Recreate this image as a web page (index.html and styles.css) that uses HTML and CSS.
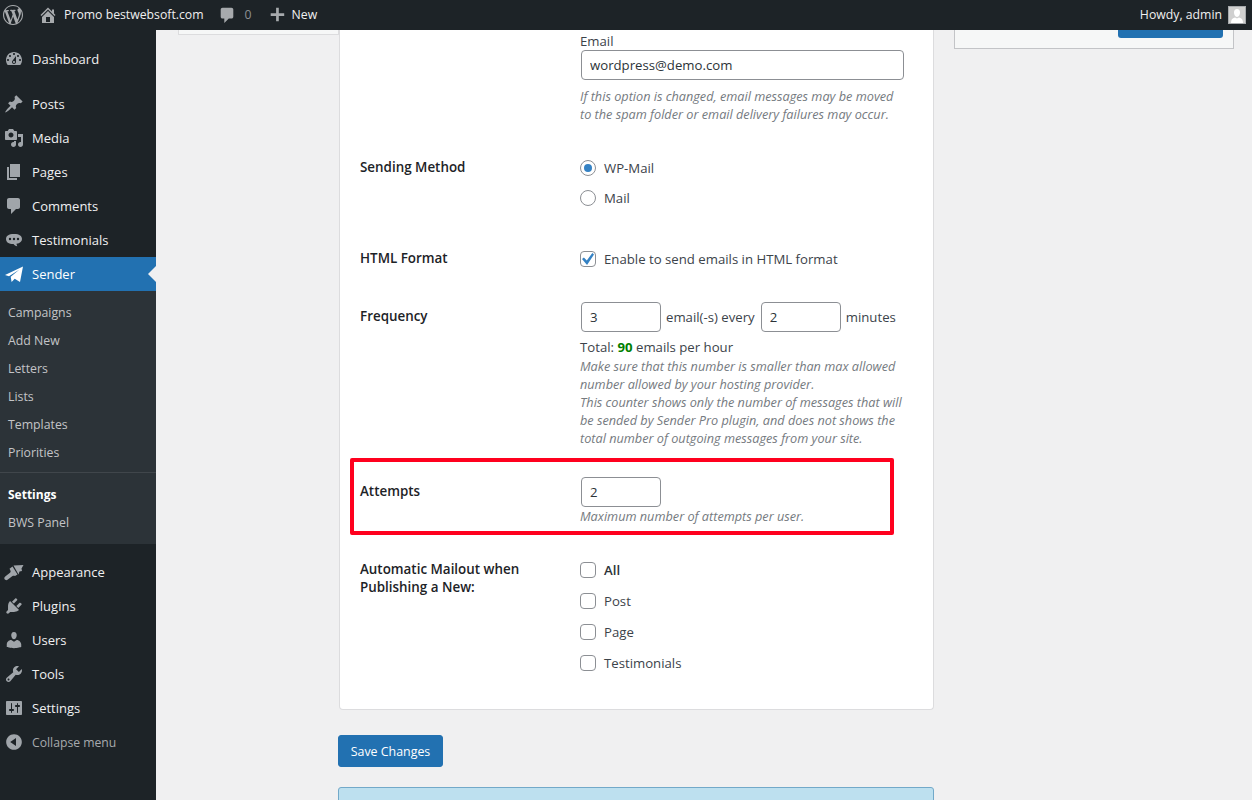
FILE: index.html
```html
<!DOCTYPE html>
<html lang="en">
<head>
<meta charset="utf-8">
<title>Sender Settings</title>
<link rel="stylesheet" href="styles.css">
</head>
<body>
<header class="adminbar">
  <svg class="ab-logo" viewBox="0 0 20 20"><path d="M20 10c0-5.51-4.49-10-10-10C4.48 0 0 4.49 0 10c0 5.52 4.48 10 10 10 5.51 0 10-4.48 10-10zM7.78 15.37L4.37 6.22c.55-.02 1.17-.08 1.17-.08.5-.06.44-1.13-.06-1.11 0 0-1.45.11-2.37.11-.18 0-.37 0-.58-.01C4.12 2.69 6.87 1.11 10 1.11c2.33 0 4.45.87 6.05 2.34-.68-.11-1.65.39-1.65 1.58 0 .74.45 1.36.9 2.1.35.61.55 1.36.55 2.46 0 1.49-1.4 5-1.4 5l-3.03-8.37c.54-.02.82-.17.82-.17.5-.05.44-1.25-.06-1.22 0 0-1.44.12-2.37.12-.85 0-2.29-.12-2.29-.12-.5-.03-.56 1.2-.06 1.22l.92.08 1.26 3.41zM17.41 10c.24-.64.74-1.87.43-4.25.7 1.29 1.05 2.71 1.05 4.25 0 3.29-1.73 6.24-4.4 7.78.97-2.59 1.94-5.2 2.92-7.78zM6.1 18.09C3.12 16.65 1.11 13.53 1.11 10c0-1.3.23-2.48.72-3.59C3.25 10.3 4.67 14.2 6.1 18.09zm4.03-6.63l2.58 6.98c-.86.29-1.76.45-2.71.45-.79 0-1.57-.11-2.29-.33.81-2.38 1.62-4.74 2.42-7.1z"/></svg>
  <svg class="ab-home" viewBox="0 0 20 20"><path d="M16 8.5l1.53 1.53-1.06 1.06L10 4.62l-6.47 6.47-1.06-1.06L10 2.5l4 4v-2h2v4zm-6-2.46l6 5.99V18H4v-5.97zM12 17v-5H8v5h4z"/></svg>
  <span class="ab-site">Promo bestwebsoft.com</span>
  <svg class="ab-comment" viewBox="0 0 20 20"><path d="M5 2h10c1.1 0 2 .9 2 2v8c0 1.1-.9 2-2 2h-3l-5 5v-5H5c-1.1 0-2-.9-2-2V4c0-1.1.9-2 2-2z"/></svg>
  <span class="ab-count">0</span>
  <svg class="ab-plus" viewBox="0 0 20 20"><path d="M12 2v6h6v3h-6v6H9v-6H3V8h6V2z"/></svg>
  <span class="ab-new">New</span>
  <span class="ab-howdy">Howdy, admin</span>
  <span class="ab-avatar"><svg viewBox="0 0 16 16"><path d="M8 2c2 0 3 1.500 3 3.500S10 10 8 10 5 7.500 5 5.500 6 2 8 2zM2 16c0-3 1-5 4-5.500l2 1 2-1c3 .5 4 2.500 4 5.500z"/></svg></span>
</header>
<div class="shell">
  <nav class="sidebar">
    <ul class="menu">
      <li class="item"><svg viewBox="0 0 20 20"><path d="M3.76 16h12.48c1.1-1.370 1.760-3.110 1.760-5 0-4.420-3.580-8-8-8s-8 3.580-8 8c0 1.890.660 3.630 1.760 5zM10 4c.55 0 1 .45 1 1s-.45 1-1 1-1-.45-1-1 .45-1 1-1zM6 6c.55 0 1 .45 1 1s-.45 1-1 1-1-.45-1-1 .45-1 1-1zm8 0c.55 0 1 .45 1 1s-.45 1-1 1-1-.45-1-1 .45-1 1-1zm-5.370 5.550L12 7v6c0 1.100-.9 2-2 2s-2-.9-2-2c0-.57.24-1.080.63-1.450zM4 10c.55 0 1 .45 1 1s-.45 1-1 1-1-.45-1-1 .45-1 1-1zm12 0c.55 0 1 .45 1 1s-.45 1-1 1-1-.45-1-1 .45-1 1-1zm-5 3c0-.55-.45-1-1-1s-1 .45-1 1 .45 1 1 1 1-.45 1-1z" fill-rule="evenodd"/></svg>Dashboard</li>
    </ul>
    <ul class="menu">
      <li class="item"><svg viewBox="0 0 20 20"><path d="M10.440 3.020l1.820-1.820 6.360 6.350-1.830 1.820c-1.050-.68-2.480-.57-3.410.36l-.75.75c-.92.930-1.040 2.350-.35 3.410l-1.830 1.820-2.410-2.410-2.800 2.790c-.42.42-3.380 2.710-3.800 2.290s1.860-3.390 2.280-3.810l2.790-2.790L4.100 9.360l1.830-1.820c1.050.69 2.480.57 3.400-.36l.75-.75c.93-.92 1.050-2.350.36-3.410z"/></svg>Posts</li>
      <li class="item"><svg viewBox="0 0 20 20"><path d="M13 11V4c0-.55-.45-1-1-1h-1.670L9 1H5L3.670 3H2c-.55 0-1 .45-1 1v7c0 .55.45 1 1 1h10c.55 0 1-.45 1-1zM7 4.500c1.380 0 2.500 1.120 2.500 2.500S8.380 9.500 7 9.500 4.500 8.380 4.500 7 5.620 4.500 7 4.500zM14 6h5v10.500c0 1.380-1.120 2.500-2.500 2.500S14 17.880 14 16.500s1.120-2.500 2.500-2.500c.17 0 .34.02.5.05V9h-3V6zm-4 8.050V13h2v3.500c0 1.380-1.120 2.500-2.500 2.500S7 17.880 7 16.500 8.120 14 9.500 14c.17 0 .34.02.5.05z"/></svg>Media</li>
      <li class="item"><svg viewBox="0 0 20 20"><path d="M6 15V2h10v13H6zm-1 1h8v2H3V5h2v11z"/></svg>Pages</li>
      <li class="item"><svg viewBox="0 0 20 20"><path d="M5 2h9c1.100 0 2 .9 2 2v7c0 1.100-.9 2-2 2h-2l-5 5v-5H5c-1.100 0-2-.9-2-2V4c0-1.100.9-2 2-2z"/></svg>Comments</li>
      <li class="item"><svg viewBox="0 0 20 20"><path fill-rule="evenodd" d="M10 4c5.500 0 8 2 8 5 0 2.500-2 4.200-5.500 4.800 0 1 .4 1.700.8 2.400-1.800-.3-3-1.100-3.800-2.200C4.500 14 2 12 2 9c0-3 2.500-5 8-5zM6 7.800a1.200 1.200 0 100 2.400 1.200 1.200 0 000-2.400zm4 0a1.200 1.200 0 100 2.400 1.200 1.200 0 000-2.400zm4 0a1.200 1.200 0 100 2.400 1.200 1.200 0 000-2.400z"/></svg>Testimonials</li>
      <li class="item active"><svg viewBox="0 0 20 20"><path d="M1 11 19 2.500 16 18l-5.300-3.300L7.600 18l-.9-5.200L15.500 5.500 5 12.200z"/></svg>Sender</li>
    </ul>
    <ul class="submenu">
      <li class="sub">Campaigns</li>
      <li class="sub">Add New</li>
      <li class="sub">Letters</li>
      <li class="sub">Lists</li>
      <li class="sub">Templates</li>
      <li class="sub">Priorities</li>
      <li class="sub-sep"></li>
      <li class="sub current">Settings</li>
      <li class="sub">BWS Panel</li>
    </ul>
    <ul class="menu">
      <li class="item"><svg viewBox="0 0 20 20"><path d="M9.500 3.500 19.500 3l-2 3.500.5 2.500-2.500.5-1 3zM8.500 4.500l5 8L11 14c-1-.5-1.500-.5-2.500 0l-5 3.800c-1 .7-2.500.2-3-.8s0-2 1-2.800L6 10.800c.8-.8.8-1.600.3-2.600l-.8-1.400z"/></svg>Appearance</li>
      <li class="item"><svg viewBox="0 0 20 20"><path d="M13.110 4.360L9.870 7.600 8 5.730l3.240-3.240c.35-.34 1.050-.2 1.560.32.52.51.66 1.210.31 1.550zm-8 1.770l.91-1.120 9.010 9.010-1.190.84c-.71.71-2.630 1.160-3.820 1.160H6.140L4.900 17.260c-.59.59-1.540.59-2.120 0-.59-.58-.59-1.530 0-2.120l1.240-1.240v-3.880c0-1.130.4-3.190 1.090-3.890zm7.260 3.970l3.240-3.240c.34-.35 1.040-.21 1.550.31.52.51.66 1.210.31 1.550l-3.240 3.250z"/></svg>Plugins</li>
      <li class="item"><svg viewBox="0 0 20 20"><path d="M10 9.250c-2.270 0-2.730-3.440-2.730-3.440C7 4.020 7.820 2 9.970 2c2.160 0 2.980 2.020 2.710 3.810 0 0-.41 3.440-2.680 3.440zm0 2.570L12.720 10c2.390 0 4.520 2.330 4.520 4.530v2.490s-3.650 1.130-7.240 1.130c-3.650 0-7.240-1.130-7.240-1.130v-2.490c0-2.250 1.940-4.480 4.470-4.480z"/></svg>Users</li>
      <li class="item"><svg viewBox="0 0 20 20"><path d="M16.680 9.770c-1.340 1.340-3.300 1.670-4.950.99l-5.410 6.520c-.99.99-2.590.99-3.580 0s-.99-2.590 0-3.570l6.520-5.420c-.68-1.650-.35-3.610.99-4.950 1.280-1.280 3.120-1.620 4.720-1.060l-2.890 2.890 2.820 2.820 2.860-2.870c.53 1.580.18 3.390-1.080 4.650zM3.810 16.210c.4.39 1.040.39 1.430 0 .4-.4.4-1.040 0-1.430-.39-.4-1.030-.4-1.430 0-.39.39-.39 1.030 0 1.430z"/></svg>Tools</li>
      <li class="item"><svg viewBox="0 0 20 20"><path d="M18 16V4c0-.55-.45-1-1-1H3c-.55 0-1 .45-1 1v12c0 .55.45 1 1 1h14c.55 0 1-.45 1-1zM8 11h1c.55 0 1 .45 1 1s-.45 1-1 1H8v1.500c0 .28-.22.5-.5.5s-.5-.22-.5-.5V13H6c-.55 0-1-.45-1-1s.45-1 1-1h1V5.500c0-.28.22-.5.5-.5s.5.22.5.5V11zm5-2h-1c-.55 0-1-.45-1-1s.45-1 1-1h1V5.500c0-.28.22-.5.5-.5s.5.22.5.5V7h1c.55 0 1 .45 1 1s-.45 1-1 1h-1v5.500c0 .28-.22.5-.5.5s-.5-.22-.5-.5V9z"/></svg>Settings</li>
      <li class="item collapse"><svg viewBox="0 0 20 20"><path d="M10 2.160c4.330 0 7.840 3.510 7.840 7.840s-3.510 7.840-7.840 7.840S2.160 14.330 2.160 10 5.710 2.160 10 2.160zm2 11.720V6.120L6.180 9.970z"/></svg>Collapse menu</li>
    </ul>
  </nav>
  <main class="content">
    <aside class="leftbox"></aside>
    <div class="main">
      <section class="card">
        <div class="row">
          <div></div>
          <div>
            <div class="field-title">Email</div>
            <input class="text wide" type="text" value="wordpress@demo.com">
            <p class="desc spaced">If this option is changed, email messages may be moved<br>to the spam folder or email delivery failures may occur.</p>
          </div>
        </div>
        <div class="row gap-sending">
          <div class="label">Sending Method</div>
          <div class="options options-radio">
            <label class="opt"><input type="radio" name="m" checked>WP-Mail</label>
            <label class="opt"><input type="radio" name="m">Mail</label>
          </div>
        </div>
        <div class="row gap-html">
          <div class="label">HTML Format</div>
          <div class="options">
            <label class="opt"><input type="checkbox" checked>Enable to send emails in HTML format</label>
          </div>
        </div>
        <div class="row gap-freq">
          <div class="label label-input">Frequency</div>
          <div>
            <div class="freq">
              <input class="text short" type="text" value="3"><span>email(-s) every</span><input class="text short" type="text" value="2"><span>minutes</span>
            </div>
            <div class="total">Total: <b class="num">90</b> emails per hour</div>
            <p class="desc tight">Make sure that this number is smaller than max allowed<br>number allowed by your hosting provider.<br>This counter shows only the number of messages that will<br>be sended by Sender Pro plugin, and does not shows the<br>total number of outgoing messages from your site.</p>
          </div>
        </div>
        <div class="row gap-attempts">
          <div class="highlight"></div>
          <div class="label label-input">Attempts</div>
          <div>
            <input class="text short" type="text" value="2">
            <p class="desc">Maximum number of attempts per user.</p>
          </div>
        </div>
        <div class="row gap-mail">
          <div class="label">Automatic Mailout when<br>Publishing a New:</div>
          <div class="options options-check">
            <label class="opt strong"><input type="checkbox">All</label>
            <label class="opt"><input type="checkbox">Post</label>
            <label class="opt"><input type="checkbox">Page</label>
            <label class="opt"><input type="checkbox">Testimonials</label>
          </div>
        </div>
      </section>
      <button class="save" type="button">Save Changes</button>
      <div class="notice"></div>
    </div>
    <aside class="sidebox"><span class="sidebtn"></span></aside>
  </main>
</div>
</body>
</html>
```

FILE: styles.css
```css
* { box-sizing: border-box; }
html, body { height: 800px; overflow: hidden; }
body {
  margin: 0;
  background: #f0f0f1;
  color: #3c434a;
  font: 13px/18px "Open Sans", "Noto Sans", sans-serif;
}
ul { list-style: none; margin: 0; padding: 0; }
p { margin: 0; }

.adminbar {
  height: 30px;
  background: #1d2327;
  color: #f0f0f1;
  display: flex;
  align-items: center;
  line-height: 30px;
  font-size: 12.25px;
}
.adminbar svg { fill: #a7aaad; flex: none; display: block; }
.ab-logo { width: 20px; height: 20px; margin-left: 3px; }
.ab-home { width: 20px; height: 20px; margin-left: 15px; }
.ab-site { margin-left: 6px; }
.ab-comment { width: 18px; height: 18px; margin-left: 14px; }
.ab-count { margin-left: 9px; color: #8c8f94; }
.ab-plus { width: 18px; height: 18px; margin-left: 16px; }
.ab-new { margin-left: 6px; }
.ab-howdy { margin-left: auto; margin-right: 6px; }
.ab-avatar {
  width: 18px;
  height: 18px;
  margin-right: 6px;
  border: 1px solid #a7aaad;
  background: #d0d0d0;
  display: block;
}
.adminbar .ab-avatar svg { fill: #fff; width: 16px; height: 16px; }

.shell { display: flex; height: 770px; }
.sidebar {
  width: 156px;
  flex: none;
  background: #1d2327;
  color: #f0f0f1;
  padding-top: 12px;
}
.menu { margin-bottom: 11px; }
.menu:nth-of-type(2), .submenu + .menu { margin-bottom: 0; }
.item {
  height: 34px;
  line-height: 34px;
  padding-left: 32px;
  position: relative;
  display: flex;
  align-items: center;
}
.item svg {
  position: absolute;
  left: 4px;
  top: 7px;
  width: 20px;
  height: 20px;
  fill: #a0a5aa;
}
.item.active { background: #2271b1; color: #fff; }
.item.active svg { fill: #fff; }
.item.active::after {
  content: "";
  position: absolute;
  right: 0;
  top: 9px;
  border: 8px solid transparent;
  border-right-color: #f0f0f1;
  border-left-width: 0;
}
.item.collapse { color: #a7aaad; font-size: 12.2px; padding-top: 1px; }

.submenu {
  background: #2c3338;
  padding: 8px 0 7px;
  margin-bottom: 11px;
  font-size: 12.3px;
  color: #c3c4c7;
}
.sub { height: 28px; line-height: 28px; padding-left: 8px; }
.sub.current { color: #fff; font-weight: 700; font-size: 12px; }
.sub-sep { height: 1px; margin: 5px 0 8px; background: #40464b; }

.content {
  flex: 1;
  padding-left: 22px;
  display: flex;
  align-items: flex-start;
}
.leftbox {
  width: 161px;
  height: 5px;
  flex: none;
  background: #f6f7f7;
  border: 1px solid #dcdcde;
  border-top: 0;
}
.main { width: 596px; flex: none; margin-left: -1px; }
.sidebox {
  width: 280px;
  height: 19px;
  margin-left: 20px;
  flex: none;
  background: #f6f7f7;
  border: 1px solid #c3c4c7;
  border-top: 0;
  display: flex;
  justify-content: flex-end;
  padding-right: 10px;
}
.sidebtn {
  width: 105px;
  height: 8px;
  background: #2271b1;
  border-radius: 0 0 3px 3px;
}

.card {
  margin-left: 1px;
  width: 595px;
  height: 680px;
  padding: 2px 20px 0;
  background: #fff;
  border: 1px solid #dcdcde;
  border-top: 0;
  border-radius: 0 0 4px 4px;
  font-size: 13.2px;
}
.row {
  position: relative;
  display: grid;
  grid-template-columns: 220px 1fr;
}
.gap-sending { margin-top: 35px; }
.gap-html { margin-top: 42px; }
.gap-freq { margin-top: 34px; }
.gap-attempts { margin-top: 30px; }
.gap-mail { margin-top: 35px; }

.label { font-weight: 600; color: #1d2327; font-size: 13.4px; }
.label-input { padding-top: 5px; }
.field-title { color: #3c434a; }
.text {
  display: block;
  height: 30px;
  margin: 0 0 0 1px;
  padding: 0 8px;
  border: 1px solid #8c8f94;
  border-radius: 4px;
  background: #fff;
  color: #2c3338;
  font: inherit;
}
.wide { width: 323px; }
.short { width: 80px; }
.desc { color: #757a80; font-style: italic; font-size: 12.7px; }
.spaced { margin-top: 7px; }
.tight { margin-top: 1px; }
.freq { display: flex; align-items: center; gap: 5px; }
.total { margin-top: 6px; }
.num { color: #008000; font-weight: 700; }

.options { padding-top: 1px; display: flex; flex-direction: column; }
.options-radio { gap: 12px; }
.options-check { gap: 13px; }
.opt { display: flex; align-items: center; height: 18px; }
.opt.strong { font-weight: 600; color: #2c3338; }
.opt input {
  appearance: none;
  width: 16px;
  height: 16px;
  margin: 0 8px 0 0;
  border: 1px solid #8c8f94;
  background: #fff;
  border-radius: 4px;
  position: relative;
  flex: none;
}
.opt input[type="radio"] { border-radius: 50%; }
.opt input[type="radio"]:checked::before {
  content: "";
  position: absolute;
  left: 3px;
  top: 3px;
  width: 8px;
  height: 8px;
  border-radius: 50%;
  background: #3582c4;
}
.opt input[type="checkbox"]:checked::before {
  content: "";
  position: absolute;
  left: 1px;
  top: 1px;
  width: 12px;
  height: 12px;
  background: #3582c4;
  clip-path: polygon(0 50%, 16% 38%, 40% 62%, 86% 0, 100% 12%, 42% 100%);
}

.highlight {
  position: absolute;
  left: -10px;
  top: -19px;
  width: 544px;
  height: 77px;
  border: 4px solid #ff001e;
  border-radius: 2px;
  pointer-events: none;
}

.save {
  display: block;
  width: 105px;
  height: 32px;
  margin-top: 25px;
  padding: 1px 0 0;
  border: 1px solid #2271b1;
  border-radius: 3px;
  background: #2271b1;
  color: #fff;
  font: inherit;
  font-size: 12.4px;
}
.notice {
  height: 40px;
  margin-top: 20px;
  background: #bde0ef;
  border: 1px solid #72a9c9;
  border-radius: 3px 3px 0 0;
}
```
